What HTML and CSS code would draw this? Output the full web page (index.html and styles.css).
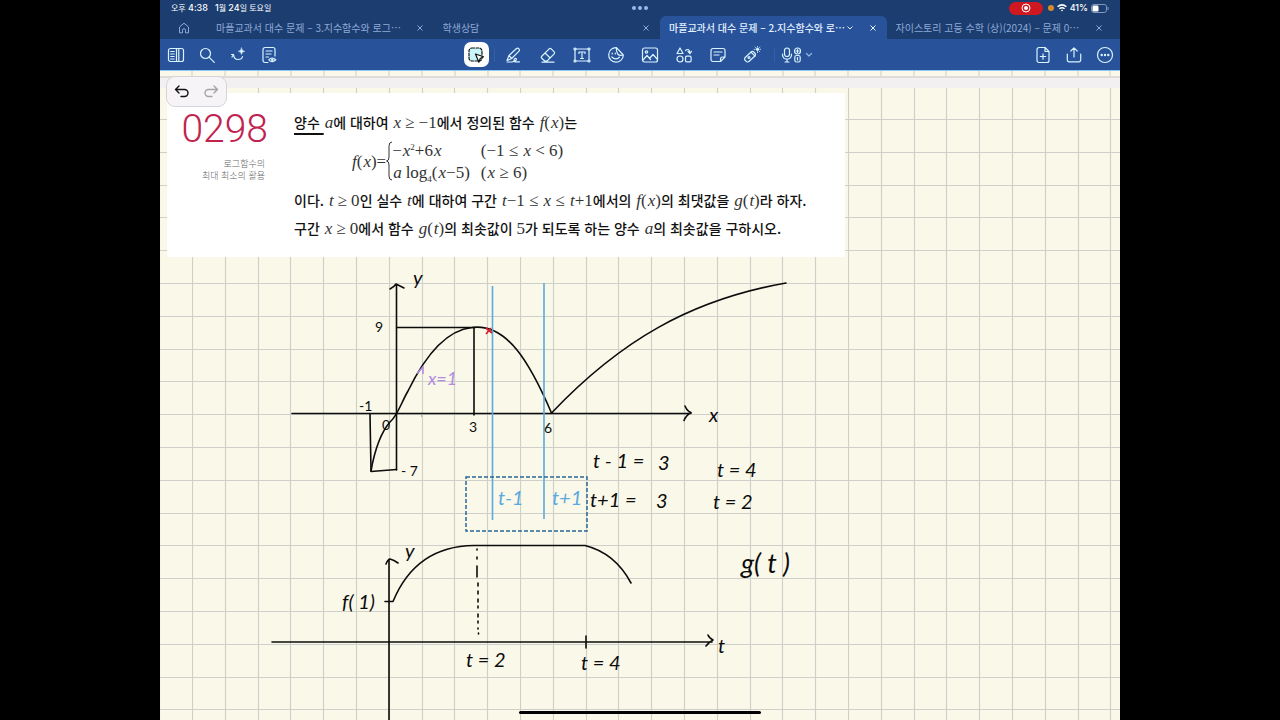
FILE: index.html
```html
<!DOCTYPE html>
<html lang="ko">
<head>
<meta charset="utf-8">
<title>마플교과서 대수 문제 - 2.지수함수와 로그함수</title>
<link rel="stylesheet" href="styles.css">
</head>
<body>
<div class="app">
  <header class="top">
    <div class="status">
      <div class="status-time"><span>오후 <b>4:38</b></span><span><b>1</b>월 <b>24</b>일 토요일</span></div>
      <div class="status-dots"><i></i><i></i><i></i></div>
      <div class="status-right">
        <span class="rec"><svg width="10" height="10" viewBox="0 0 10 10"><circle cx="5" cy="5" r="4" fill="none" stroke="#fff"/><circle cx="5" cy="5" r="2" fill="#fff"/></svg></span>
        <span class="mic-dot"></span>
        <svg width="10" height="8" viewBox="0 0 10 8" fill="none" stroke="#fff" stroke-width="1.5"><path d="M.6 2.8Q5-1 9.4 2.8M2.4 4.8Q5 2.6 7.6 4.8"/><path d="M3.9 6.1Q5 5.2 6.1 6.1L5 7.4Z" fill="#fff" stroke="none"/></svg>
        <b>41%</b>
        <svg width="18" height="9" viewBox="0 0 18 9"><rect x=".5" y=".5" width="15" height="8" rx="2.4" fill="none" stroke="#8298bd"/><rect x="1.5" y="1.5" width="6" height="6" rx="1.2" fill="#fff"/><path d="M17 3v3" stroke="#8298bd"/></svg>
      </div>
    </div>
    <nav class="tabs" aria-label="문서 탭">
      <button class="home" aria-label="홈"><svg width="12" height="12" viewBox="0 0 12 12"><path d="M1.5 5 6 1.2 10.500 5V10.800H7.500V8.200A1.500 1.500 0 0 0 4.500 8.200V10.800H1.500Z"/></svg></button>
      <div class="tab"><button class="title">마플교과서 대수 문제 – 3.지수함수와 로그⋯</button><button class="close" aria-label="닫기"><svg width="6" height="6" viewBox="0 0 6 6"><path d="M.5.5l5 5M5.500.5l-5 5"/></svg></button></div>
      <div class="tab"><button class="title">학생상담</button><button class="close" aria-label="닫기"><svg width="6" height="6" viewBox="0 0 6 6"><path d="M.5.5l5 5M5.500.5l-5 5"/></svg></button></div>
      <div class="tab active"><button class="title">마플교과서 대수 문제 – 2.지수함수와 로⋯</button><svg class="chev" width="6" height="4" viewBox="0 0 6 4"><path d="M.5.5 3 3 5.500.5"/></svg><button class="close" aria-label="닫기"><svg width="6" height="6" viewBox="0 0 6 6"><path d="M.5.5l5 5M5.500.5l-5 5"/></svg></button></div>
      <div class="tab"><button class="title">자이스토리 고등 수학 (상)(2024) – 문제 0⋯</button><button class="close" aria-label="닫기"><svg width="6" height="6" viewBox="0 0 6 6"><path d="M.5.5l5 5M5.500.5l-5 5"/></svg></button></div>
    </nav>
  </header>

  <div class="toolbar" role="toolbar">
    <div class="group">
      <button class="tool narrow" aria-label="사이드바"><svg width="18" height="18" viewBox="0 0 18 18"><rect x="1.500" y="2.500" width="15" height="13" rx="2"/><path d="M9.500 2.500v13M11.800 2.500v13M3.700 5.500h3.500M3.700 8h3.500M3.700 10.500h3.500M3.700 13h3.500"/></svg></button>
      <button class="tool narrow" aria-label="검색"><svg width="18" height="18" viewBox="0 0 18 18"><circle cx="7.500" cy="7.500" r="5"/><path d="m11.300 11.300 5 5"/></svg></button>
      <button class="tool narrow" aria-label="AI"><svg width="18" height="18" viewBox="0 0 18 18"><path d="M2.500 8.500H4.500Q5 13.500 9 13.500T13.500 10.500M4.500 8.500 3 11"/><path d="M12.500 2Q12.800 5 15.800 5.300 12.800 5.600 12.500 8.600 12.200 5.600 9.200 5.300 12.200 5 12.500 2Z" fill="#d9f4ff" stroke-width=".5"/></svg></button>
      <button class="tool narrow" aria-label="읽기 모드"><svg width="18" height="18" viewBox="0 0 18 18"><path d="M8 16.500H5a2 2 0 0 1-2-2V3.500a2 2 0 0 1 2-2h8a2 2 0 0 1 2 2V10M6 5h6M6 8h5M6 11h2.500"/><path d="M8.800 13.800Q12 10.200 15.800 13.800 12 17.400 8.800 13.800Z"/><circle cx="12.300" cy="13.800" r=".7"/></svg></button>
    </div>
    <div class="group">
      <button class="tool selected" aria-label="올가미"><svg width="18" height="18" viewBox="0 0 18 18"><rect x="2" y="2" width="13" height="13" rx="3" fill="#c9f4fa" stroke="#111" stroke-dasharray="2.600 1.500"/><path d="m8.500 8 8 2.800-3.300 1.700-1.400 3.700Z" fill="#fff" stroke="#111"/></svg></button>
      <span class="sep"></span>
      <button class="tool" aria-label="펜"><svg width="18" height="18" viewBox="0 0 18 18"><path d="m2 14.500 2-5 7.500-7q1.400-.8 2.400.4t.1 2.300l-7.300 7.300Z M4 9.500l2.700 3M2 16h5q5-1.200 4.300-3.300-1.500-1.200-2.300 1.300-.1 2 2 1.800h3.500"/></svg></button>
      <button class="tool" aria-label="지우개"><svg width="18" height="18" viewBox="0 0 18 18"><path d="m2.500 10.500 7.700-7.700q1-.8 2 0l3 3q.8 1 0 2L8 15H5.800l-3.300-3q-.6-.7 0-1.500ZM6 7l5.200 5M3 16.200h12"/></svg></button>
      <button class="tool" aria-label="텍스트"><svg width="18" height="18" viewBox="0 0 18 18"><rect x="2" y="3" width="14" height="12"/><path d="M6 7.500V6h6v1.500M9 6v6.500M7.500 12.500h3"/><g fill="#28539a"><circle cx="2" cy="3" r="1"/><circle cx="16" cy="3" r="1"/><circle cx="2" cy="15" r="1"/><circle cx="16" cy="15" r="1"/></g></svg></button>
      <button class="tool" aria-label="스티커"><svg width="18" height="18" viewBox="0 0 18 18"><path d="M9.500 1.600A7.300 7.300 0 1 0 16.300 9Q12.500 10.200 10.700 8T9.500 1.600L16.300 9M4.800 11q3.800 3.800 7.600.2M5.200 7v1M8.300 7v1"/></svg></button>
      <button class="tool" aria-label="이미지"><svg width="18" height="18" viewBox="0 0 18 18"><rect x="1.500" y="2" width="15" height="14" rx="2"/><circle cx="5.500" cy="6" r="1.200"/><path d="m2 14 4-4.500 3.500 4M8.500 12.500 12 8.500l4.500 5"/></svg></button>
      <button class="tool" aria-label="도형"><svg width="18" height="18" viewBox="0 0 18 18"><path d="m5 2 3 5.500H2ZM10.500 4.500q4-3 4.500 3M13 5.500l2 2 1.500-2.200"/><circle cx="5" cy="13" r="3"/><rect x="10.500" y="10.200" width="5.600" height="5.600" rx="1.300"/></svg></button>
      <button class="tool" aria-label="메모"><svg width="18" height="18" viewBox="0 0 18 18"><path d="M4 2.500h10a2 2 0 0 1 2 2V11l-4.500 4.500H4a2 2 0 0 1-2-2v-9a2 2 0 0 1 2-2ZM16 11h-2.500a2 2 0 0 0-2 2v2.500M5 6h8M5 9h5"/></svg></button>
      <button class="tool" aria-label="레이저"><svg width="18" height="18" viewBox="0 0 18 18"><rect x="1" y="8" width="12" height="5.500" rx="2.300" transform="rotate(-43 7 10.700)"/><path d="m8 6.200 4 4"/><circle cx="6" cy="11.500" r="1"/><circle cx="14.500" cy="3.300" r="1" fill="#d9f4ff"/><path d="M14.500 0v1M14.500 5.600v1M11.200 3.300h1M16.800 3.300h1M12.200 1l.7.7M16.800 1l-.7.7M16.100 5l.7.7" stroke-width=".8"/></svg></button>
      <span class="sep"></span>
      <button class="tool wide" aria-label="녹음"><svg width="32" height="18" viewBox="0 0 32 18"><rect x="3.500" y="2" width="5" height="8.500" rx="2.500"/><path d="M1.500 8v1q.5 4 4.500 4.200 4-.2 4.500-4.200V8M6 13.200V16M4 16h4"/><circle cx="16.500" cy="5" r="3"/><path d="M16.500 3.500v3M15 5h3"/><rect x="13.800" y="9.500" width="5.400" height="6.500" rx="1.800"/><path d="M16.500 11.500v2.500"/><path d="M25.500 7.500 28 10l2.500-2.500" stroke="#8fb5e6"/></svg></button>
    </div>
    <div class="group end">
      <button class="tool narrow" aria-label="페이지 추가"><svg width="18" height="18" viewBox="0 0 18 18"><path d="M5 1.500h6l4 4v9a2 2 0 0 1-2 2H5a2 2 0 0 1-2-2v-11a2 2 0 0 1 2-2ZM11 1.500v4h4M9 7.800v5.400M6.300 10.500h5.400"/></svg></button>
      <button class="tool narrow" aria-label="공유"><svg width="18" height="18" viewBox="0 0 18 18"><path d="M2.300 8v6a1.800 1.800 0 0 0 1.800 1.800h9.800a1.800 1.800 0 0 0 1.800-1.800V8M9 11V2M5.800 5 9 1.800 12.200 5"/></svg></button>
      <button class="tool narrow" aria-label="더 보기"><svg width="18" height="18" viewBox="0 0 18 18"><circle cx="9" cy="9" r="7.500"/><g fill="#d9f4ff" stroke="none"><circle cx="5.700" cy="9" r="1.200"/><circle cx="9" cy="9" r="1.200"/><circle cx="12.300" cy="9" r="1.200"/></g></svg></button>
    </div>
  </div>

  <main class="notes">
    <svg class="prev-page" aria-hidden="true"><path d="M32 0v6M65 0v6M98 0v6M131 0v6M164 0v6M196 0v6M229 0v6M262 0v6M295 0v6M328 0v6M360 0v6M393 0v6M426 0v6M459 0v6M492 0v6M524 0v6M557 0v6M590 0v6M623 0v6M655 0v6M688 0v6M721 0v6M754 0v6M786 0v6M819 0v6M852 0v6M885 0v6M918 0v6M950 0v6" stroke="#cfcec5"/></svg>
    <div class="page-gap"></div>
    <section class="page">
      <svg class="ink" viewBox="160 88 960 632" preserveAspectRatio="xMinYMin slice">
        <defs>
          <pattern id="grid" x="192" y="119" width="328" height="328" patternUnits="userSpaceOnUse">
            <path d="M.5 0V328M33.500 0V328M66.500 0V328M98.500 0V328M131.500 0V328M164.500 0V328M197.500 0V328M230.500 0V328M262.500 0V328M295.500 0V328M0 .5H328M0 33.500H328M0 66.500H328M0 98.500H328M0 131.500H328M0 164.500H328M0 197.500H328M0 230.500H328M0 262.500H328M0 295.500H328" stroke="#d0d0ca" stroke-width="1.200"/>
          </pattern>
        </defs>
        <rect x="160" y="88" width="960" height="632" fill="url(#grid)"/>
        <g class="stroke">
          <path d="M292 413.500H691M685 406q2 5 6 6.500-5 3-7 8"/>
          <path d="M396.500 470V285M390 289q4-2 6-5 4 2 8 4"/>
          <path d="M371 471Q377 437 390 422C398 415 401 403 408 391C427 352 448 330 472 327.500C507 323 530 363 551.500 413"/>
          <path d="M551.500 413C620 341 690 300 786 283"/>
          <path d="M397 327.500H475M474 328V415M370 414L371 471.500 396.500 469.500"/>
          <path d="M272 642H712M708 635q1 3 5 5-4 2-7 6"/>
          <path d="M389 720V560M386 564q2-5 4-5 4 1 8 4"/>
          <path d="M385 601.500H393Q416 546 474 545.500H585Q615 553 631 583"/>
          <path d="M586 636V648"/>
          <path d="M477 549v1M477 557v2M477 566v11M478 583v3M478 591v3M478 599v3M478 606v2M478 614v3M478 621v2M478 628v1M478.500 633v1"/>
        </g>
        <g class="blue"><path d="M492.500 286V520M544 283V519"/></g>
        <path d="M417 373.500 423 367V374" fill="none" stroke="#b18be0" stroke-width="1.500"/>
        <path d="M486 328l6 5M491 328l-5 6" stroke="#d8202c" stroke-width="1.800"/>
        <path d="M421 416h1" stroke="#777"/>
        <g class="hand">
          <text x="413" y="285">y</text>
          <text class="s" x="375" y="332">9</text>
          <text class="s" x="359" y="411">-1</text>
          <text class="s" x="382" y="430">0</text>
          <text class="s" x="469" y="432">3</text>
          <text class="s" x="544" y="433">6</text>
          <text class="s" x="401" y="476">- 7</text>
          <text x="709" y="422">x</text>
          <text x="593" y="468">t - 1 =</text>
          <text x="658" y="470">3</text>
          <text x="590" y="507">t+1 =</text>
          <text x="656" y="508">3</text>
          <text x="717" y="477">t = 4</text>
          <text x="713" y="509">t = 2</text>
          <text x="405" y="558">y</text>
          <text x="342" y="609">f( 1)</text>
          <text x="466" y="667">t = 2</text>
          <text x="581" y="670">t = 4</text>
          <text x="718" y="653">t</text>
          <text class="l" x="741" y="573">g( t )</text>
          <text class="violet" x="428" y="385">x=1</text>
          <text class="sky" x="498" y="505">t-1</text>
          <text class="sky" x="552" y="505">t+1</text>
        </g>
        <rect x="466" y="477" width="121" height="54" fill="none" stroke="#2b6794" stroke-width="1.500" stroke-dasharray="4 2"/>
      </svg>

      <article class="problem">
        <div class="problem-id">
          <h1>0298</h1>
          <p>로그함수의<br>최대 최소의 활용</p>
        </div>
        <div class="problem-text">
          <p><u>양수 </u><i>a</i>에 대하여 <i>x</i> <em>≥ −1</em>에서 정의된 함수 <i>f</i><em>(</em><i>x</i><em>)</em>는</p>
          <div class="def">
            <span><i>f</i><em>(</em><i>x</i><em>)=</em></span>
            <svg width="6" height="40" viewBox="0 0 6 40"><path d="M6 1Q3 1 3 5V16Q3 20 .5 20 3 20 3 24V35Q3 39 6 39" fill="none" stroke="#333"/></svg>
            <div class="cases">
              <span><em>−</em><i>x</i><sup>2</sup><em>+6</em><i>x</i></span><span><em>(−1 ≤ </em><i>x</i><em> &lt; 6)</em></span>
              <span><i>a</i> <em>log</em><sub>4</sub><em>(</em><i>x</i><em>−5)</em></span><span><em>(</em><i>x</i><em> ≥ 6)</em></span>
            </div>
          </div>
          <p>이다. <i>t</i> <em>≥ 0</em>인 실수 <i>t</i>에 대하여 구간 <i>t</i><em>−1 ≤ </em><i>x</i><em> ≤ </em><i>t</i><em>+1</em>에서의 <i>f</i><em>(</em><i>x</i><em>)</em>의 최댓값을 <i>g</i><em>(</em><i>t</i><em>)</em>라 하자.</p>
          <p>구간 <i>x</i> <em>≥ 0</em>에서 함수 <i>g</i><em>(</em><i>t</i><em>)</em>의 최솟값이 <em>5</em>가 되도록 하는 양수 <i>a</i>의 최솟값을 구하시오.</p>
        </div>
      </article>
      <div class="home-indicator"></div>
    </section>
    <div class="history">
      <button aria-label="실행 취소"><svg width="16" height="14" viewBox="0 0 16 14"><path d="M5 1 1.500 4.500 5 8M1.500 4.500H10.500A3.500 3.500 0 0 1 10.500 11.500H7"/></svg></button>
      <button class="off" aria-label="다시 실행"><svg width="16" height="14" viewBox="0 0 16 14"><path d="M11 1l3.500 3.500L11 8M14.500 4.500H5.500A3.500 3.500 0 0 0 5.500 11.500H9"/></svg></button>
    </div>
  </main>
</div>
</body>
</html>
```
FILE: styles.css
```css
* { box-sizing: border-box; }
body {
  margin: 0;
  background: #000;
  font-family: Inter, "Noto Sans CJK KR", sans-serif;
}
button {
  margin: 0;
  padding: 0;
  border: 0;
  background: none;
  color: inherit;
  font: inherit;
}
svg { display: block; }

.app {
  width: 75%;
  min-height: 100vh;
  margin: 0 auto;
  display: flex;
  flex-direction: column;
  overflow: hidden;
}

.top { background: #1c3d70; color: #fff; }
.status {
  display: grid;
  grid-template-columns: 1fr auto 1fr;
  align-items: center;
  height: 16px;
  padding: 0 11px;
  font-size: 8px;
  line-height: 16px;
}
.status b { font-size: 9px; font-weight: 500; }
.status-time { display: flex; gap: 7px; font-weight: 400; }
.status-dots { display: flex; gap: 2px; }
.status-dots i { width: 4px; height: 4px; border-radius: 50%; background: #9db8e4; }
.status-right { display: flex; justify-content: flex-end; align-items: center; gap: 3px; }
.rec {
  display: grid;
  place-items: center;
  width: 34px;
  height: 13px;
  margin-right: 2px;
  border-radius: 7px;
  background: #cf1820;
}
.mic-dot { width: 6px; height: 6px; border-radius: 50%; background: #d98a2b; }

.tabs {
  display: flex;
  height: 23px;
  padding-right: 7px;
  color: #8ea9d6;
  font-family: "Noto Sans CJK KR", sans-serif;
  font-size: 10px;
}
.tabs svg { fill: none; stroke: currentColor; }
.home { width: 47px; display: grid; place-items: center; }
.tab {
  flex: 1;
  min-width: 0;
  display: flex;
  align-items: center;
  padding: 0 11px 0 9px;
  border-radius: 6px 6px 0 0;
}
.title {
  flex: 1;
  overflow: hidden;
  text-align: left;
  white-space: nowrap;
}
.active { background: #28539a; color: #e2f0ff; }
.active .title { flex: none; font-weight: 500; }
.chev { margin: 0 auto 0 2px; }

.toolbar {
  display: grid;
  grid-template-columns: 1fr auto 1fr;
  align-items: center;
  height: 32px;
  border-bottom: 1px solid #8fc6f5;
  background: #28539a;
}
.group { display: flex; align-items: center; }
.end { justify-content: flex-end; }
.tool { display: grid; place-items: center; width: 34px; height: 25px; }
.tool svg {
  fill: none;
  stroke: #d9f4ff;
  stroke-width: 1.2;
  stroke-linecap: round;
  stroke-linejoin: round;
}
.narrow { width: 31px; }
.wide { width: 40px; }
.selected { width: 25px; border-radius: 7px; background: #fff; }
.sep { width: 1px; height: 14px; margin: 0 2px 0 5px; background: #34609f; }

.notes {
  position: relative;
  flex: 1;
  display: flex;
  flex-direction: column;
  background: #faf8e9;
}
.prev-page { width: 100%; height: 5px; }
.page-gap {
  height: 12px;
  border-top: 2px solid #dedcd8;
  background: #f2f0f1;
}
.page { position: relative; flex: 1; }
.ink { position: absolute; width: 100%; height: 100%; }
.stroke path { fill: none; stroke: #0c0c0c; stroke-width: 1.6; stroke-linecap: round; stroke-linejoin: round; }
.blue path { fill: none; stroke: #5aaadf; stroke-width: 1.6; }
.hand {
  font-family: Lato, sans-serif;
  font-size: 20px;
  font-style: italic;
  fill: #0c0c0c;
}
.hand .s { font-size: 14px; font-style: normal; }
.hand .l { font-size: 27px; }
.hand .violet { font-size: 18px; fill: #b18be0; }
.hand .sky { fill: #5aaadf; }

.problem {
  position: absolute;
  top: 5px;
  left: 7px;
  display: flex;
  gap: 26px;
  width: 678px;
  padding: 15px 0;
  background: #fff;
}
.problem-id { width: 101px; padding-top: 3px; text-align: right; }
.problem-id h1 {
  margin: 0;
  color: #c1234f;
  font-family: Roboto, sans-serif;
  font-size: 39px;
  font-weight: 300;
  line-height: 36px;
}
.problem-id p {
  margin: 11px 3px 0 0;
  color: #666;
  font-family: "Noto Sans CJK KR", sans-serif;
  font-size: 9px;
  font-weight: 300;
  line-height: 12px;
}
.problem-text {
  color: #111;
  font-family: "Noto Sans CJK KR", sans-serif;
  font-size: 14px;
  font-weight: 500;
  line-height: 28px;
  white-space: nowrap;
}
.problem-text p { margin: 0; height: 28px; }
.problem-text u { text-decoration-thickness: 2px; text-underline-offset: 5px; white-space: pre; }
.problem-text i, .problem-text em, .problem-text sup, .problem-text sub {
  color: #333;
  font-family: "Liberation Serif", serif;
  font-size: 17px;
  font-weight: 400;
  line-height: 1;
}
.problem-text i { margin-left: 1px; }
.problem-text em { font-style: normal; white-space: pre; }
.problem-text sup, .problem-text sub { font-size: 9px; }
.def { display: flex; align-items: center; height: 50px; padding-left: 57px; }
.cases {
  display: grid;
  grid-template-columns: auto auto;
  column-gap: 11px;
  line-height: 22px;
}

.history {
  position: absolute;
  top: 5px;
  left: 6px;
  display: flex;
  width: 61px;
  height: 31px;
  border: 1px solid #d6d4d8;
  border-radius: 9px;
  background: #f6f4f7;
}
.history button { flex: 1; display: grid; place-items: center; }
.history svg { fill: none; stroke: #111; stroke-width: 1.4; stroke-linecap: round; stroke-linejoin: round; }
.history .off svg { stroke: #a5a3a8; }

.home-indicator {
  position: absolute;
  bottom: 6px;
  left: 50%;
  width: 242px;
  height: 3px;
  border-radius: 2px;
  background: #000;
  transform: translateX(-50%);
}
```
